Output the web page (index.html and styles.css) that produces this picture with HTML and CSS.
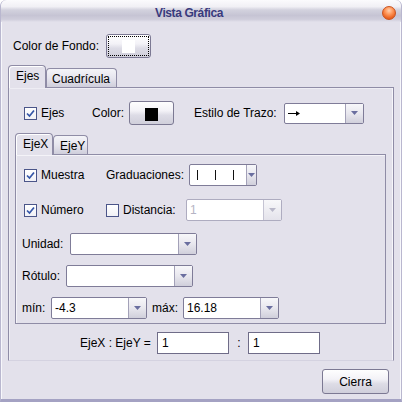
FILE: index.html
```html
<!DOCTYPE html>
<html>
<head>
<meta charset="utf-8">
<link rel="stylesheet" href="styles.css">
</head>
<body>
<div class="window">
  <div class="titlebar">
    <div class="title">Vista Gráfica</div>
    <div class="close-wrap"><span class="close"></span></div>
  </div>

  <div class="row bg-row">
    <span class="lbl lbl-bg">Color de Fondo:</span>
    <button class="btn btn-bg"><span class="focus"><span class="swatch white"></span></span></button>
  </div>

  <div class="tabs outer-tabs">
    <div class="tab sel tab-ejes">Ejes</div>
    <div class="tab tab-cuad">Cuadrícula</div>
  </div>
  <div class="panel outer-panel">
    <div class="row ejes-row">
      <label class="chk-group g-ejes"><span class="chk on"><svg width="11" height="11" viewBox="0 0 11 11"><path d="M2 5.5 L4.5 8 L9 2.5" fill="none" stroke="#3556a8" stroke-width="1.7"/></svg></span>Ejes</label>
      <span class="lbl lbl-color">Color:</span>
      <button class="btn btn-color"><span class="swatch black"></span></button>
      <span class="lbl lbl-estilo">Estilo de Trazo:</span>
      <div class="combo c-estilo"><span class="val"><svg width="13" height="7" viewBox="0 0 13 7"><path d="M0 3.5 H11" stroke="#000" stroke-width="1"/><path d="M8 1 L12 3.5 L8 6 Z" fill="#000"/></svg></span><span class="arrow"><svg width="7" height="4" viewBox="0 0 7 4"><path d="M0 0 H7 L3.5 4 Z" fill="#6a6e9f"/></svg></span></div>
    </div>

    <div class="tabs inner-tabs">
      <div class="tab sel tab-x">EjeX</div>
      <div class="tab tab-y">EjeY</div>
    </div>
    <div class="panel inner-panel">
      <div class="row muestra-row">
        <label class="chk-group g-muestra"><span class="chk on"><svg width="11" height="11" viewBox="0 0 11 11"><path d="M2 5.5 L4.5 8 L9 2.5" fill="none" stroke="#3556a8" stroke-width="1.7"/></svg></span>Muestra</label>
        <span class="lbl lbl-grad">Graduaciones:</span>
        <div class="combo c-grad"><span class="val ticks"><span class="tick"></span><span class="tick"></span><span class="tick"></span></span><span class="arrow"><svg width="7" height="4" viewBox="0 0 7 4"><path d="M0 0 H7 L3.5 4 Z" fill="#6a6e9f"/></svg></span></div>
      </div>

      <div class="row numero-row">
        <label class="chk-group g-numero"><span class="chk on"><svg width="11" height="11" viewBox="0 0 11 11"><path d="M2 5.5 L4.5 8 L9 2.5" fill="none" stroke="#3556a8" stroke-width="1.7"/></svg></span>Número</label>
        <label class="chk-group g-dist"><span class="chk"></span>Distancia:</label>
        <div class="combo c-dist disabled"><span class="val">1</span><span class="arrow"><svg width="7" height="4" viewBox="0 0 7 4"><path d="M0 0 H7 L3.5 4 Z" fill="#b9b8c9"/></svg></span></div>
      </div>

      <div class="row unidad-row">
        <span class="lbl lbl-unidad">Unidad:</span>
        <div class="combo c-unidad"><span class="val"></span><span class="arrow"><svg width="7" height="4" viewBox="0 0 7 4"><path d="M0 0 H7 L3.5 4 Z" fill="#6a6e9f"/></svg></span></div>
      </div>

      <div class="row rotulo-row">
        <span class="lbl lbl-rotulo">Rótulo:</span>
        <div class="combo c-rotulo"><span class="val"></span><span class="arrow"><svg width="7" height="4" viewBox="0 0 7 4"><path d="M0 0 H7 L3.5 4 Z" fill="#6a6e9f"/></svg></span></div>
      </div>

      <div class="row minmax-row">
        <span class="lbl lbl-min">mín:</span>
        <div class="combo c-min"><span class="val">-4.3</span><span class="arrow"><svg width="7" height="4" viewBox="0 0 7 4"><path d="M0 0 H7 L3.5 4 Z" fill="#6a6e9f"/></svg></span></div>
        <span class="lbl lbl-max">máx:</span>
        <div class="combo c-max"><span class="val">16.18</span><span class="arrow"><svg width="7" height="4" viewBox="0 0 7 4"><path d="M0 0 H7 L3.5 4 Z" fill="#6a6e9f"/></svg></span></div>
      </div>
    </div>

    <div class="row ratio-row">
      <span class="lbl lbl-ratio">EjeX : EjeY =</span>
      <span class="field">1</span>
      <span class="lbl colon">:</span>
      <span class="field">1</span>
    </div>
  </div>

  <div class="footer">
    <button class="btn btn-cierra">Cierra</button>
  </div>
</div>
</body>
</html>
```

FILE: styles.css
```css
html, body {
  margin: 0;
  padding: 0;
  background: #ffffff;
}
body {
  font-family: "Liberation Sans", Arial, sans-serif;
  font-size: 12px;
  color: #000;
}
.window {
  width: 402px;
  height: 402px;
  box-sizing: border-box;
  background: #e3e1eb;
  border-radius: 6px 6px 0 0;
  border-left: 1px solid #b9b7cf;
  border-right: 1px solid #b9b7cf;
  border-bottom: 3px solid #a4a2c3;
  box-shadow: inset 1px 0 0 #f7f7fb, inset -1px 0 0 #f7f7fb;
  overflow: hidden;
}
.titlebar {
  height: 22px;
  display: flex;
  background: linear-gradient(#fbfbfd 0%, #f1f0f5 30%, #d3d2de 45%, #c6c4d4 70%, #cfcddb 88%, #e3e1eb 100%);
  border-radius: 6px 6px 0 0;
}
.title {
  width: 376px;
  text-align: center;
  font-weight: bold;
  font-size: 12px;
  letter-spacing: -0.4px;
  color: #383a7d;
  line-height: 22px;
  padding-top: 2px;
  box-sizing: border-box;
}
.close-wrap {
  width: 24px;
  padding-top: 6px;
  padding-left: 5px;
  box-sizing: border-box;
}
.close {
  display: block;
  width: 14px;
  height: 14px;
  border-radius: 50%;
  box-sizing: border-box;
  border: 1px solid #c8521e;
  background: radial-gradient(circle at 50% 30%, #ffd0b0 0%, #ff9a5e 35%, #ec6624 70%, #d84e14 100%);
}

.row {
  display: flex;
  align-items: center;
}
.lbl {
  white-space: nowrap;
}
.bg-row {
  margin-top: 12px;
  height: 24px;
  padding-left: 12px;
}
.lbl-bg { width: 93px; }

.btn {
  font: inherit;
  color: #000;
  box-sizing: border-box;
  border: 1px solid #7c7993;
  border-radius: 3px;
  background: linear-gradient(#fefefe 0%, #f3f2f7 40%, #dddce6 60%, #d0cfdb 100%);
  padding: 0;
  margin: 0;
  display: flex;
  align-items: center;
  justify-content: center;
}
.btn-bg {
  width: 45px;
  height: 24px;
  padding: 1px;
}
.focus {
  flex: 1;
  align-self: stretch;
  border: 1px dotted #000;
  display: flex;
  align-items: center;
  justify-content: center;
}
.swatch {
  display: block;
  width: 13px;
  height: 13px;
}
.swatch.white { background: #ffffff; }
.swatch.black { background: #000000; margin-top: 2px; }

.tabs {
  display: flex;
  align-items: flex-end;
  position: relative;
  z-index: 1;
}
.tab {
  box-sizing: border-box;
  border: 1px solid #8f8ca6;
  border-bottom: none;
  border-radius: 4px 4px 0 0;
  background: linear-gradient(#f4f4f8 0%, #e6e5ee 50%, #cfcedb 100%);
  padding-left: 6px;
  line-height: 18px;
  white-space: nowrap;
}
.tab.sel {
  background: #e3e1eb;
  box-shadow: inset 1px 1px 0 #ffffff;
  margin-bottom: -1px;
  line-height: 19px;
  padding-top: 1px;
}
.outer-tabs {
  margin-top: 7px;
  height: 22px;
  padding-left: 7px;
}
.tab-ejes { width: 38px; height: 23px; padding-left: 7px; }
.tab-cuad { width: 71px; height: 19px; padding-left: 5px; padding-top: 1px; }

.panel {
  box-sizing: border-box;
  border: 1px solid #8f8ca6;
}
.outer-panel {
  margin-left: 7px;
  width: 386px;
  height: 274px;
  border-bottom-color: #d4d2e0;
  box-shadow: inset -1px 0 0 #f6f6fa, inset 1px 1px 0 #eeedf4;
}

.ejes-row {
  margin-top: 13px;
  height: 24px;
  padding-left: 15px;
}
.chk-group {
  display: flex;
  align-items: center;
  white-space: nowrap;
}
.chk {
  width: 13px;
  height: 13px;
  box-sizing: border-box;
  border: 1px solid #4b5589;
  background: linear-gradient(#ffffff, #f1f1f6);
  margin-right: 4px;
  display: flex;
  align-items: center;
  justify-content: center;
  flex: none;
}
.g-ejes { width: 68px; }
.lbl-color { width: 37px; }
.btn-color { width: 45px; height: 24px; }
.lbl-estilo { width: 90px; margin-left: 20px; }

.combo {
  box-sizing: border-box;
  height: 22px;
  border: 1px solid #7f7c98;
  border-radius: 2px;
  background: #ffffff;
  display: flex;
}
.combo .val {
  flex: 1;
  padding-left: 3px;
  display: flex;
  align-items: center;
  white-space: nowrap;
}
.combo .arrow {
  width: 17px;
  border-left: 1px solid #a3a1b8;
  background: linear-gradient(#f7f7fa 0%, #e8e7ee 50%, #d0cfdb 100%);
  display: flex;
  align-items: center;
  justify-content: center;
}
.c-estilo { width: 80px; height: 21px; }
.c-estilo .val { padding-left: 3px; }

.inner-tabs {
  margin-top: 8px;
  height: 21px;
  padding-left: 6px;
}
.tab-x { width: 38px; height: 22px; padding-left: 7px; }
.tab-y { width: 35px; height: 19px; padding-left: 6px; padding-top: 1px; }

.inner-panel {
  margin-left: 6px;
  width: 371px;
  height: 170px;
  box-shadow: inset 1px 1px 0 #f4f3f8;
}

.muestra-row {
  margin-top: 9px;
  height: 22px;
  padding-left: 8px;
}
.g-muestra { width: 82px; }
.lbl-grad { width: 83px; }
.c-grad { width: 68px; }
.tick {
  display: block;
  width: 1px;
  height: 10px;
  background: #111;
  margin-left: 5px;
  margin-right: 12px;
}
.tick:first-child { margin-left: 4px; }

.numero-row {
  margin-top: 13px;
  height: 22px;
  padding-left: 8px;
}
.g-numero { width: 82px; }
.g-dist { width: 80px; }
.c-dist { width: 96px; }
.combo.disabled { border-color: #aeacc0; }
.combo.disabled .val { color: #b5b4c4; }
.combo.disabled .arrow { border-left-color: #c5c4d3; background: linear-gradient(#f8f8fa, #e4e3eb); }

.unidad-row {
  margin-top: 12px;
  height: 22px;
  padding-left: 6px;
}
.lbl-unidad { width: 48px; }
.c-unidad { width: 127px; }

.rotulo-row {
  margin-top: 10px;
  height: 22px;
  padding-left: 6px;
}
.lbl-rotulo { width: 44px; }
.c-rotulo { width: 127px; }

.minmax-row {
  margin-top: 10px;
  height: 22px;
  padding-left: 6px;
}
.lbl-min { width: 29px; }
.c-min { width: 96px; }
.lbl-max { width: 31px; margin-left: 5px; }
.c-max { width: 96px; }

.ratio-row {
  margin-top: 8px;
  height: 22px;
  padding-left: 71px;
}
.lbl-ratio { width: 77px; }
.field {
  box-sizing: border-box;
  width: 72px;
  height: 22px;
  border: 1px solid #6f6c88;
  background: #ffffff;
  padding-left: 4px;
  display: flex;
  align-items: center;
}
.colon {
  width: 19px;
  text-align: center;
  padding-left: 1px;
  box-sizing: border-box;
}

.footer {
  display: flex;
  justify-content: flex-end;
  margin-top: 8px;
  padding-right: 12px;
}
.btn-cierra {
  width: 67px;
  height: 25px;
}
```
